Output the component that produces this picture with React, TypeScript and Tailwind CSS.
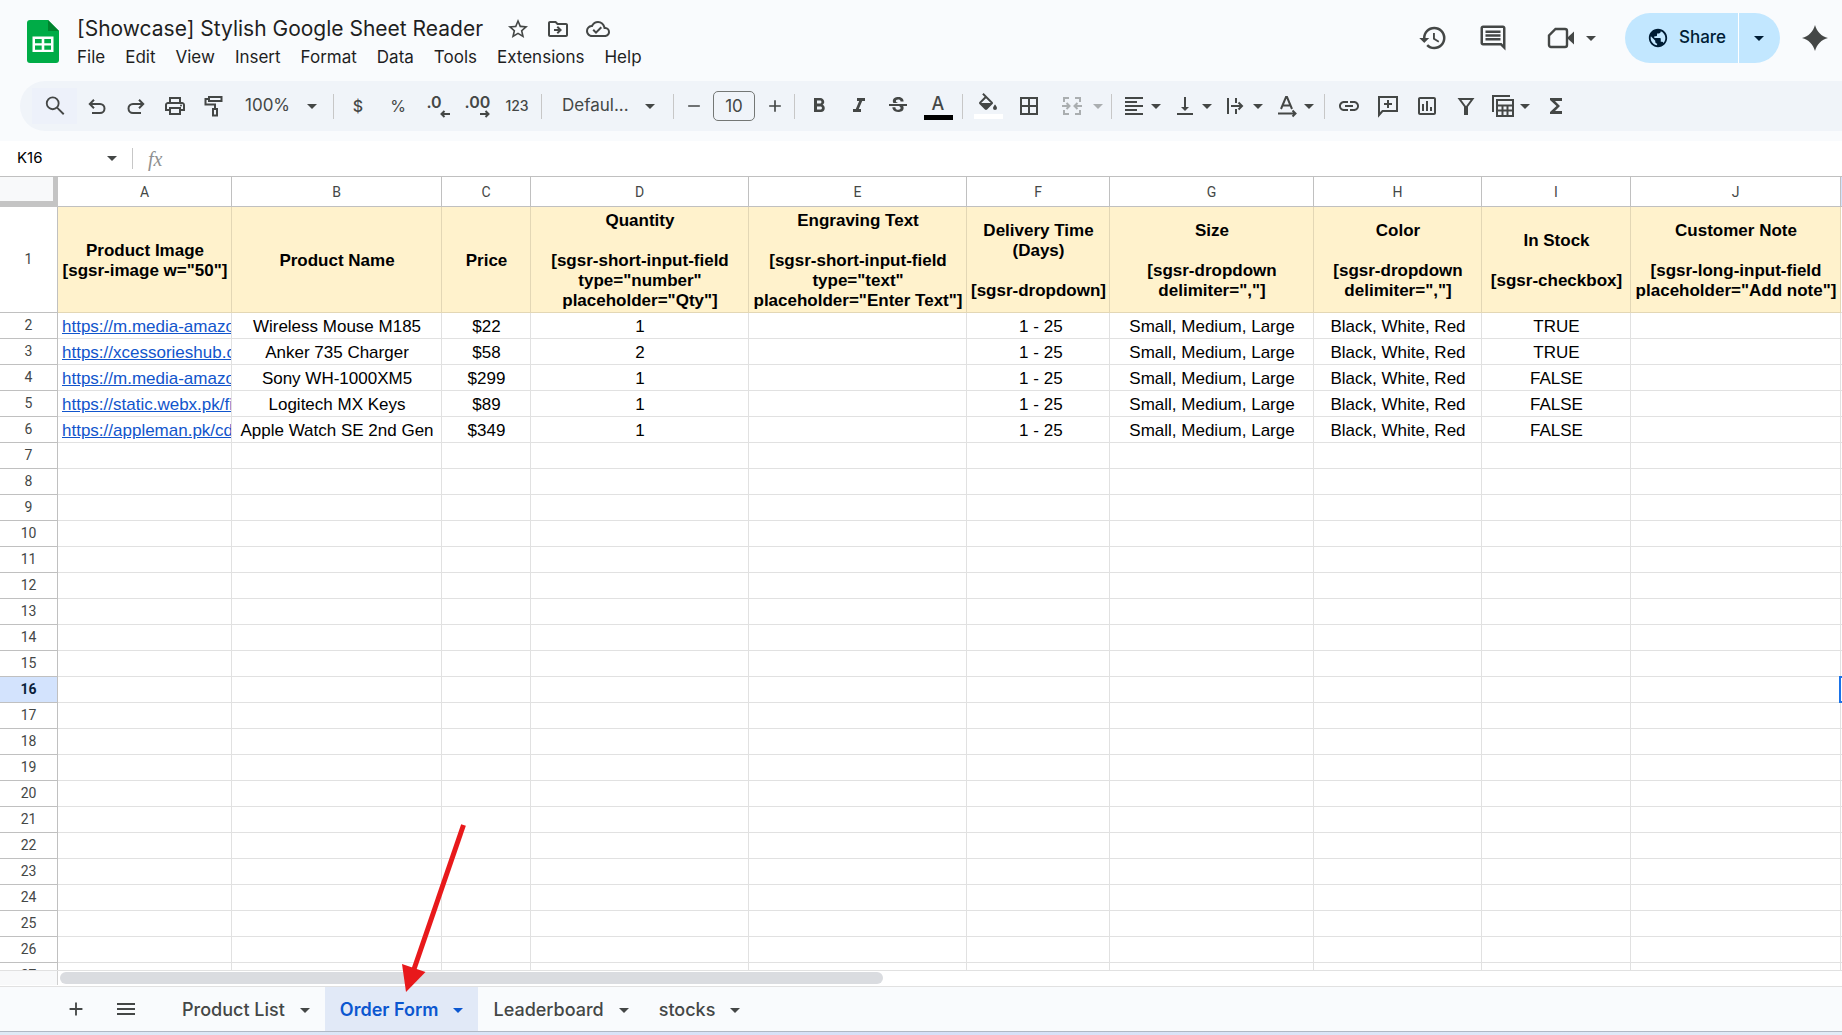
import React from "react";
import {
  MdAdd,
  MdBorderAll,
  MdFormatAlignLeft,
  MdFormatBold,
  MdFormatItalic,
  MdFunctions,
  MdHistory,
  MdLink,
  MdMenu,
  MdOutlineCloudDone,
  MdOutlineComment,
  MdOutlineDriveFileMove,
  MdOutlineInsertChart,
  MdOutlinePrint,
  MdPublic,
  MdRemove,
  MdStarOutline,
  MdStrikethroughS,
  MdVerticalAlignBottom,
} from "react-icons/md";

const UI_FONT = "font-['Inter','Liberation_Sans',sans-serif]";

function Caret({ className = "" }: { className?: string }) {
  return (
    <svg viewBox="0 0 10 5" className={`h-[5px] w-[10px] shrink-0 fill-current ${className}`} aria-hidden="true">
      <path d="M0 0h10L5 5z" />
    </svg>
  );
}

function Stroke({ children, className = "size-6" }: { children: React.ReactNode; className?: string }) {
  return (
    <svg viewBox="0 0 24 24" fill="none" stroke="currentColor" strokeWidth="2" className={className} aria-hidden="true">
      {children}
    </svg>
  );
}

function UndoIcon() {
  return (
    <Stroke>
      <path d="M7 19h8a4.500 4.500 0 0 0 0-9H5.500M9 5.800 4.800 10 9 14.200" />
    </Stroke>
  );
}

function RedoIcon() {
  return (
    <Stroke>
      <path d="M17 19H9a4.500 4.500 0 0 1 0-9h9.500M15 5.800 19.200 10 15 14.200" />
    </Stroke>
  );
}

function PaintIcon() {
  return (
    <Stroke>
      <path d="M7 3h12.500v4H7zM7 5H3.500v5.500H13V15M11 15h4v6.500h-4z" />
    </Stroke>
  );
}

function DecimalIcon({ digits, more }: { digits: string; more?: boolean }) {
  return (
    <span className={`flex flex-col items-end ${more ? "" : "pr-2"}`}>
      <span className="text-base leading-4 font-semibold">{digits}</span>
      <svg
        viewBox="0 0 10 8"
        className={`h-2 w-[10px] ${more ? "" : "-mr-2"}`}
        fill="none"
        stroke="currentColor"
        strokeWidth="2"
        aria-hidden="true"
      >
        {more ? <path d="M0 4h9M5.500 1 8.500 4l-3 3" /> : <path d="M10 4H1M4.500 1 1.500 4l3 3" />}
      </svg>
    </span>
  );
}

function TextColorIcon() {
  return (
    <span className="flex flex-col items-center">
      <span className="h-[22px] text-lg leading-[22px] font-medium">A</span>
      <span className="h-[5px] w-[29px] bg-black" />
    </span>
  );
}

function FillIcon() {
  return (
    <span className="flex flex-col items-center gap-[3px]">
      <svg viewBox="0 0 24 18" className="h-[18px] w-6 fill-current" aria-hidden="true">
        <path d="M16.560 8.940 7.620 0 6.210 1.410l2.380 2.380-5.150 5.150a1.490 1.490 0 0 0 0 2.120l5.500 5.500c.29.29.68.44 1.060.44s.77-.15 1.060-.44l5.500-5.500c.59-.58.59-1.530 0-2.120zM5.210 10 10 5.210 14.790 10zM19 11.500s-2 2.170-2 3.500a2 2 0 0 0 4 0c0-1.330-2-3.500-2-3.500z" />
      </svg>
      <span className="h-[5px] w-[29px] bg-white" />
    </span>
  );
}

function MergeIcon() {
  return (
    <Stroke>
      <path d="M9 4H4v4M9 20H4v-4M15 4h5v4M15 20h5v-4M2 12h7M6.500 9l3 3-3 3M22 12h-7M17.500 9l-3 3 3 3" />
    </Stroke>
  );
}

function WrapIcon() {
  return (
    <Stroke>
      <path d="M4 4v16M12 4v5M12 15v5M7 12h11M14.500 8.500 18 12l-3.500 3.500" />
    </Stroke>
  );
}

function RotateIcon() {
  return (
    <Stroke>
      <path d="M6 15 11 3h1l5 12M8 11.500h7M3 19.500h17M17.500 16.500l3 3-3 3" />
    </Stroke>
  );
}

function AddCommentIcon() {
  return (
    <Stroke>
      <path d="M3 21V3h18v14H6.500zM12 6v8M8 10h8" />
    </Stroke>
  );
}

function FilterIcon() {
  return (
    <Stroke>
      <path d="M5.500 5h13l-5.500 7.500V20h-2v-7.500z" />
    </Stroke>
  );
}

function TableIcon() {
  return (
    <Stroke>
      <path d="M2 18V2h17M6 6h16v16H6zM6 11.500h16M6 16.500h16M11.500 11.500V22M16.500 11.500V22" />
    </Stroke>
  );
}

function VideoIcon() {
  return (
    <svg viewBox="0 0 28 22" className="h-[22px] w-7" aria-hidden="true">
      <path d="M8.500 2H18a2 2 0 0 1 2 2v14a2 2 0 0 1-2 2H4a2 2 0 0 1-2-2V8.500z" fill="none" stroke="currentColor" strokeWidth="2.400" />
      <path d="M20.500 10.500 27 4.500v13l-6.500-6z" fill="currentColor" />
    </svg>
  );
}

function SheetsLogo() {
  return (
    <svg viewBox="0 0 32 43" className="h-[43px] w-8 shrink-0" role="img" aria-label="Sheets home">
      <path d="M3 0h18l11 11v29a3 3 0 0 1-3 3H3a3 3 0 0 1-3-3V3a3 3 0 0 1 3-3z" fill="#00ac47" />
      <path d="M21 0l11 11H21z" fill="#00832d" />
      <path d="M5.500 16.500h21V32h-21zM8 19v4.200h6.700V19zM17.300 19v4.200H24V19zM8 25.500v4.200h6.700v-4.200zM17.300 25.500v4.200H24v-4.200z" fill="#fff" fillRule="evenodd" />
    </svg>
  );
}

function Tool({ label, className = "w-10", children }: { label: string; className?: string; children: React.ReactNode }) {
  return (
    <button type="button" aria-label={label} className={`flex h-9 shrink-0 items-center justify-center ${className}`}>
      {children}
    </button>
  );
}

function MenuTool({ label, className = "w-[51px] gap-[5px] pl-1.5", children }: { label: string; className?: string; children: React.ReactNode }) {
  return (
    <button type="button" aria-label={label} className={`flex h-9 shrink-0 items-center ${className}`}>
      {children}
      <Caret />
    </button>
  );
}

function Divider() {
  return <span className="mx-1 h-[25px] w-px shrink-0 bg-[#c7c7c7]" />;
}

const MENUS = ["File", "Edit", "View", "Insert", "Format", "Data", "Tools", "Extensions", "Help"];

function Header() {
  return (
    <header className="flex h-[81px] shrink-0 items-start justify-between pr-3.5 pl-[27px] text-[#444746]">
      <div className="flex gap-[18px]">
        <a href="#home" className="mt-5">
          <SheetsLogo />
        </a>
        <div className="pt-[15px]">
          <div className="flex items-center">
            <h1 className="text-[21px] leading-7 whitespace-nowrap text-[#1f1f1f]">[Showcase] Stylish Google Sheet Reader</h1>
            <div className="ml-[23px] flex gap-4">
              <button type="button" aria-label="Star"><MdStarOutline className="size-6" /></button>
              <button type="button" aria-label="Move"><MdOutlineDriveFileMove className="size-6" /></button>
              <button type="button" aria-label="Saved to Drive"><MdOutlineCloudDone className="size-6" /></button>
            </div>
          </div>
          <nav className="mt-0.5 flex gap-5 text-[17px] leading-6 text-[#1f1f1f]">
            {MENUS.map((m) => (
              <button type="button" key={m}>{m}</button>
            ))}
          </nav>
        </div>
      </div>
      <div className="mt-[13px] flex h-[50px] items-center">
        <button type="button" aria-label="Version history" className="mr-[30px]"><MdHistory className="size-[30px]" /></button>
        <button type="button" aria-label="Comments" className="mr-[39px]"><MdOutlineComment className="size-[30px]" /></button>
        <button type="button" aria-label="Join a call" className="mr-[29px] flex items-center gap-[11px]"><VideoIcon /><Caret /></button>
        <div className="mr-[22px] flex h-full overflow-hidden rounded-full bg-[#c2e7ff] text-[#001d35]">
          <button type="button" className="flex w-[113px] items-center gap-2.5 pl-[22px] text-[17px] font-medium">
            <MdPublic className="size-[22px]" />
            Share
          </button>
          <button type="button" aria-label="Share options" className="flex w-[42px] items-center border-l border-white pl-[15px]"><Caret /></button>
        </div>
        <button type="button" aria-label="Ask Gemini">
          <svg viewBox="0 0 24 24" className="size-[26px] fill-current" aria-hidden="true">
            <path d="M12 0C13.500 6 18 10.500 24 12 18 13.500 13.500 18 12 24 10.500 18 6 13.500 0 12 6 10.500 10.500 6 12 0z" />
          </svg>
        </button>
      </div>
    </header>
  );
}

function Toolbar() {
  return (
    <div role="toolbar" aria-label="Main" className="ml-5 flex h-[50px] shrink-0 items-center overflow-hidden rounded-l-full bg-[#f0f4f9] pl-3 text-[#444746]">
      <Tool label="Search menus" className="w-[45px] bg-[#edf1fa]">
        <Stroke className="size-[22px]">
          <circle cx="9.500" cy="9" r="6.500" />
          <path d="M14 13.500 21.500 21" />
        </Stroke>
      </Tool>
      <Tool label="Undo" className="w-[39px]"><UndoIcon /></Tool>
      <Tool label="Redo" className="w-[39px]"><RedoIcon /></Tool>
      <Tool label="Print" className="w-[39px]"><MdOutlinePrint className="size-6" /></Tool>
      <Tool label="Paint format" className="w-[39px]"><PaintIcon /></Tool>
      <button type="button" className="flex h-9 w-24 shrink-0 items-center justify-between px-3 text-[17px]">
        100%
        <Caret />
      </button>
      <Divider />
      <Tool label="Currency"><span className="text-base font-medium">$</span></Tool>
      <Tool label="Percent"><span className="text-base">%</span></Tool>
      <Tool label="Decrease decimal places"><DecimalIcon digits=".0" /></Tool>
      <Tool label="Increase decimal places" className="w-[39px]"><DecimalIcon digits=".00" more /></Tool>
      <Tool label="More formats"><span className="text-sm font-medium">123</span></Tool>
      <Divider />
      <button type="button" className="flex h-9 w-[123px] shrink-0 items-center justify-between pr-3.5 pl-4 text-[17px]">
        Defaul...
        <Caret />
      </button>
      <Divider />
      <Tool label="Decrease font size" className="w-[31px]"><MdRemove className="size-5" /></Tool>
      <input aria-label="Font size" defaultValue="10" className="mx-1 h-[30px] w-[42px] shrink-0 rounded-[5px] border border-[#747775] text-center text-[17px]" />
      <Tool label="Increase font size" className="w-[31px]"><MdAdd className="size-5" /></Tool>
      <Divider />
      <Tool label="Bold"><MdFormatBold className="size-6" /></Tool>
      <Tool label="Italic" className="w-[39px]"><MdFormatItalic className="size-6" /></Tool>
      <Tool label="Strikethrough"><MdStrikethroughS className="size-6" /></Tool>
      <Tool label="Text color"><TextColorIcon /></Tool>
      <Divider />
      <Tool label="Fill color" className="w-[42px]"><FillIcon /></Tool>
      <Tool label="Borders"><MdBorderAll className="size-6" /></Tool>
      <MenuTool label="Merge cells" className="w-[58px] gap-[9px] pl-[11px] opacity-40"><MergeIcon /></MenuTool>
      <Divider />
      <MenuTool label="Horizontal align"><MdFormatAlignLeft className="size-6" /></MenuTool>
      <MenuTool label="Vertical align"><MdVerticalAlignBottom className="size-6" /></MenuTool>
      <MenuTool label="Text wrapping"><WrapIcon /></MenuTool>
      <MenuTool label="Text rotation"><RotateIcon /></MenuTool>
      <Divider />
      <Tool label="Insert link" className="w-[39px]"><MdLink className="size-6" /></Tool>
      <Tool label="Insert comment" className="w-[39px]"><AddCommentIcon /></Tool>
      <Tool label="Insert chart" className="w-[39px]"><MdOutlineInsertChart className="size-6" /></Tool>
      <Tool label="Create a filter" className="w-[39px]"><FilterIcon /></Tool>
      <MenuTool label="Table views"><TableIcon /></MenuTool>
      <Tool label="Functions"><MdFunctions className="size-6" /></Tool>
    </div>
  );
}

function FormulaBar() {
  return (
    <div className="mt-2.5 flex h-[35px] shrink-0 items-center bg-white">
      <input aria-label="Name box" defaultValue="K16" className="w-[90px] pl-[17px] text-[15px] text-black" />
      <button type="button" aria-label="Named ranges" className="ml-[17px] text-[#444746]"><Caret /></button>
      <span className="ml-[15px] h-[21px] w-px bg-[#c7c7c7]" />
      <label htmlFor="formula" className="ml-[15px] font-['Liberation_Serif',serif] text-xl text-[#8f9191] italic">fx</label>
      <input id="formula" className="ml-4 h-full min-w-0 flex-1 outline-none" />
    </div>
  );
}

const COLUMNS = [
  { id: "A", width: "w-[174px]", head: ["Product Image", '[sgsr-image w="50"]'] },
  { id: "B", width: "w-[210px]", head: ["Product Name"] },
  { id: "C", width: "w-[89px]", head: ["Price"] },
  { id: "D", width: "w-[218px]", head: ["Quantity", "", "[sgsr-short-input-field", 'type="number"', 'placeholder="Qty"]'] },
  { id: "E", width: "w-[218px]", head: ["Engraving Text", "", "[sgsr-short-input-field", 'type="text"', 'placeholder="Enter Text"]'] },
  { id: "F", width: "w-[143px]", head: ["Delivery Time", "(Days)", "", "[sgsr-dropdown]"] },
  { id: "G", width: "w-[204px]", head: ["Size", "", "[sgsr-dropdown", 'delimiter=","]'] },
  { id: "H", width: "w-[168px]", head: ["Color", "", "[sgsr-dropdown", 'delimiter=","]'] },
  { id: "I", width: "w-[149px]", head: ["In Stock", "", "[sgsr-checkbox]"] },
  { id: "J", width: "w-[210px]", head: ["Customer Note", "", "[sgsr-long-input-field", 'placeholder="Add note"]'] },
  { id: "K", width: "w-[125px]", head: [] },
];

const SIZES = "Small, Medium, Large";
const COLORS = "Black, White, Red";
const DATA = [
  ["https://m.media-amazo", "Wireless Mouse M185", "$22", "1", "", " 1 - 25", SIZES, COLORS, "TRUE", "", ""],
  ["https://xcessorieshub.c", "Anker 735 Charger", "$58", "2", "", " 1 - 25", SIZES, COLORS, "TRUE", "", ""],
  ["https://m.media-amazo", "Sony WH-1000XM5", "$299", "1", "", " 1 - 25", SIZES, COLORS, "FALSE", "", ""],
  ["https://static.webx.pk/fil", "Logitech MX Keys", "$89", "1", "", " 1 - 25", SIZES, COLORS, "FALSE", "", ""],
  ["https://appleman.pk/cdn", "Apple Watch SE 2nd Gen", "$349", "1", "", " 1 - 25", SIZES, COLORS, "FALSE", "", ""],
];
const ACTIVE_ROW = 16;
const ROWS = Array.from({ length: 26 }, (_, i) => i + 2);

function Grid() {
  return (
    <div className="min-h-0 flex-1 overflow-hidden border-y border-t-[#c0c0c0] border-b-[#e1e1e1] bg-white">
      <table className="w-full min-w-[1966px] table-fixed border-separate border-spacing-0 font-['Liberation_Sans',Arial,sans-serif] text-[17px] leading-5 text-black">
        <colgroup>
          <col className="w-[58px]" />
          {COLUMNS.map((c) => (
            <col key={c.id} className={c.width} />
          ))}
        </colgroup>
        <thead className="font-['Roboto',sans-serif] text-sm text-[#444746]">
          <tr className="h-[30px]">
            <td className="border-r-[5px] border-b-[6px] border-[#c4c4c4] bg-[#f8f9fa] p-0" />
            {COLUMNS.map((c) => (
              <th key={c.id} scope="col" className={`border-r border-b border-[#c0c0c0] p-0 font-normal ${c.id === "K" ? "bg-[#d3e3fd]" : "bg-white"}`}>
                {c.id}
              </th>
            ))}
          </tr>
        </thead>
        <tbody>
          <tr className="h-[106px]">
            <th scope="row" className="border-r border-b border-[#c0c0c0] p-0 pb-0.5 font-['Roboto',sans-serif] text-sm font-normal text-[#444746]">1</th>
            {COLUMNS.map((c) => (
              <td key={c.id} className={`border-r border-b p-0 pt-0.5 pl-px text-center font-bold whitespace-nowrap ${c.head.length ? "border-[#e3d7b5] bg-[#fff2cc]" : "border-[#e1e1e1]"}`}>
                {c.head.map((line, i) => (
                  <div key={i} className="h-5">{line}</div>
                ))}
              </td>
            ))}
          </tr>
          {ROWS.map((n) => (
            <tr key={n} className="h-[26px]">
              <th
                scope="row"
                className={`border-r border-b border-[#c0c0c0] p-0 pb-0.5 font-['Roboto',sans-serif] text-sm ${n === ACTIVE_ROW ? "bg-[#d3e3fd] font-bold text-[#0b1f3a]" : "font-normal text-[#444746]"}`}
              >
                {n}
              </th>
              {COLUMNS.map((c, i) => {
                const value = DATA[n - 2]?.[i];
                return (
                  <td key={c.id} className="relative border-r border-b border-[#e1e1e1] p-0 pb-px pl-px text-center align-bottom">
                    {value && i === 0 && (
                      <a href={value} className="block overflow-hidden pl-[3px] text-left whitespace-nowrap text-[#1155cc] underline">{value}</a>
                    )}
                    {value && i > 0 && <span className="whitespace-pre">{value}</span>}
                    {n === ACTIVE_ROW && c.id === "K" && <span className="absolute -inset-x-0.5 -inset-y-px border-2 border-[#1a73e8]" />}
                  </td>
                );
              })}
            </tr>
          ))}
        </tbody>
      </table>
    </div>
  );
}

const TABS = ["Product List", "Order Form", "Leaderboard", "stocks"];

function SheetTabs() {
  return (
    <footer className="shrink-0">
      <div className="flex h-[15px] bg-white">
        <div className="h-3.5 w-[58px] shrink-0 border-r border-[#d0d0d0] bg-[#f8f9fa]" />
        <div className="mt-px ml-0.5 h-3 w-[calc(45%-6px)] rounded-full bg-[#dadce0]" />
      </div>
      <div className="flex h-[45px] border-t border-[#e1e1e1] text-[#444746]">
        <button type="button" aria-label="Add sheet" className="ml-[56px] w-10"><MdAdd className="mx-auto size-[22px]" /></button>
        <button type="button" aria-label="All sheets" className="ml-2.5 w-10"><MdMenu className="mx-auto size-6" /></button>
        <div className="ml-[21px] flex text-lg" role="tablist">
          {TABS.map((t) => (
            <button
              type="button"
              role="tab"
              aria-selected={t === "Order Form"}
              key={t}
              className={`flex items-center gap-[15px] px-[15px] pt-0.5 ${t === "Order Form" ? "bg-[#e1e9f7] font-semibold text-[#0b57d0]" : "font-medium"}`}
            >
              {t}
              <Caret />
            </button>
          ))}
        </div>
      </div>
      <div className="h-1 border-t border-[#b0b8c4] bg-linear-to-r from-[#dfeaf6] via-[#d6e0f8] to-[#e2ecf7]" />
    </footer>
  );
}

export default function App() {
  return (
    <div className={`relative flex h-screen flex-col overflow-hidden bg-[#f9fbfd] ${UI_FONT}`}>
      <Header />
      <Toolbar />
      <FormulaBar />
      <Grid />
      <SheetTabs />
      <svg viewBox="0 0 64 170" className="pointer-events-none absolute bottom-[43px] left-[400px] h-[170px] w-16 overflow-visible" aria-hidden="true">
        <path d="M63.500 3 12 153" stroke="#e8191b" strokeWidth="5" />
        <path d="M6 170 2 142l23.500 8z" fill="#e8191b" />
      </svg>
    </div>
  );
}
